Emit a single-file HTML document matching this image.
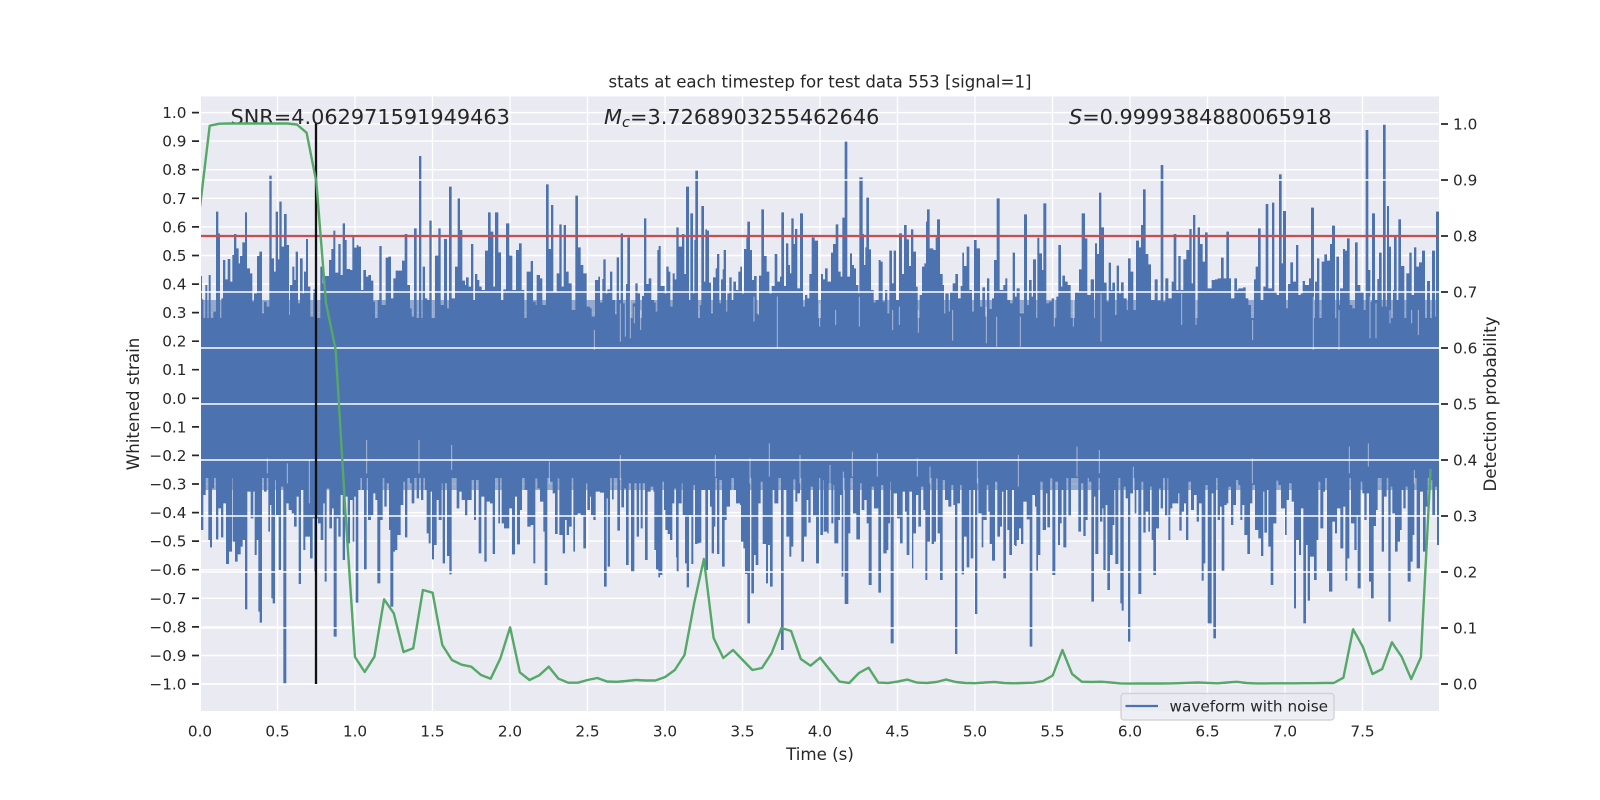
<!DOCTYPE html>
<html><head><meta charset="utf-8"><title>stats</title>
<style>html,body{margin:0;padding:0;background:#fff}svg{display:block}text{font-family:"DejaVu Sans","Liberation Sans",sans-serif;fill:#262626}</style></head>
<body>
<svg width="1600" height="800" viewBox="0 0 1600 800" xmlns="http://www.w3.org/2000/svg">
<defs><clipPath id="ax"><rect x="201" y="96.5" width="1238" height="614.5"/></clipPath></defs>
<rect x="201" y="96.5" width="1238" height="614.5" fill="#EAEAF2"/>
<path clip-path="url(#ax)" stroke="#fff" stroke-width="1.4" fill="none" d="M200 112.6H1440M200 141.1H1440M200 169.7H1440M200 198.3H1440M200 226.9H1440M200 255.5H1440M200 284.1H1440M200 312.6H1440M200 341.2H1440M200 369.7H1440M200 398.3H1440M200 426.9H1440M200 455.4H1440M200 484H1440M200 512.6H1440M200 541.1H1440M200 569.7H1440M200 598.3H1440M200 626.9H1440M200 655.5H1440M200 684H1440M277.5 96V712M355 96V712M432.5 96V712M510 96V712M587.5 96V712M665 96V712M742.5 96V712M820 96V712M897.5 96V712M975 96V712M1052.5 96V712M1130 96V712M1207.5 96V712M1285 96V712M1362.5 96V712"/>
<g clip-path="url(#ax)" fill="#4C72B0">
<rect x="200" y="340" width="1240" height="105"/>
<path transform="translate(190,90) scale(.33333)" d="M33 760V558H36V628H40V685H46V585H52V750H56V555H62V690H70V665H78V365H85V430H90V685H94V625H99V510H106V568H113V507H121V575H127V495H132V432H139V475H146V520H150V498H157V457H165V367H171V535H180V550H187V635H192V610H201V498H208V485H216V670H222V635H230V650H238V257H245V505H252V545H257V365H264V508H268V335H275V470H282V372H290V465H297V675H300V585H307V530H313V570H317V485H324V640H330V505H338V610H342V545H348V447H354V590H361V680H370V598H380V750H391V530H398V580H405V558H417V510H424V477H430V422H436V548H445V462H452V555H458V400H465V450H470V537H480V540H487V440H493V473H500V465H505V470H513V600H520V540H528V560H535V555H543V572H550V635H555V710H563V630H568V468H575V645H580V645H587V503H595V500H603V625H610V565H617V542H636V512H644V432H652V585H660V655H665V680H672V415H680V725H687V198H694V750H698V530H705V625H712V630H718V392H725V695H735V497H745V415H752V645H762V447H771V655H777V290H785V625H795V530H803V325H810V420H817V572H825V585H828V562H836V590H843V462H850V630H855V552H862V570H868V590H875V600H885V482H894V367H902V425H910V590H915V367H925V487H933V630H940V598H948V400H958V497H967V600H978V480H987V460H995V600H1003V690H1010V545H1022V513H1029V635H1037V645H1040V555H1050V565H1057V645H1068V283H1076V477H1083V345H1090V605H1100V550H1108V403H1115V590H1121V405H1128V545H1136V580H1145V660H1156V317H1164V472H1172V525H1180V550H1190V650H1200V760Z"/>
<path transform="translate(590,130) scale(.33333)" d="M0 660V535H5V560H15V450H25V440H30V518H37V447H40V388H47V490H52V478H60V425H67V510H75V553H80V382H87V510H92V310H99V520H108V462H112V322H120V625H128V520H136V460H143V490H150V600H156V498H162V265H169V462H176V445H184V510H192V518H197V545H202V360H206V348H212V468H224V490H229V410H236V425H241V530H248V430H254V448H259V292H266V350H270V350H276V312H283V432H288V170H297V510H301V250H309V490H313V330H316V122H324V565H330V525H334V228H342V455H346V298H351V302H357V458H363V550H369V442H377V415H381V372H388V520H393V448H398V418H401V360H408V545H412V490H418V442H425V510H430V455H438V480H445V425H451V410H456V490H462V357H469V322H472V275H480V360H486V450H492V438H500V550H507V437H514V238H522V378H530V425H538V490H545V468H554V372H562V455H570V440H574V247H582V468H588V340H595V405H600V430H604V265H611V342H615V297H622V475H630V250H639V530H645V495H652V505H658V432H665V322H674V332H684V580H693V432H699V448H705V415H713V455H723V368H729V342H737V283H745V425H752V440H757V263H764V35H772V440H780V370H786V405H792V415H798V465H805V490H808V142H818V312H822V405H826V352H829V203H837V358H843V480H851V518H857V510H866V390H872V395H878V515H885V480H892V550H898V362H906V460H911V362H918V510H927V310H936V432H942V285H950V328H957V408H963V298H970V365H978V470H983V570H989V495H996V410H1003V400H1008V275H1011V238H1019V355H1030V360H1037V322H1041V268H1050V432H1058V465H1062V550H1066V490H1076V545H1080V485H1088V460H1096V432H1104V505H1112V468H1117V368H1122V408H1130V350H1138V480H1146V545H1152V330H1160V355H1170V530H1177V472H1185V560H1191V445H1198V537H1206V505H1212V390H1220V205H1229V480H1240V465H1246V445H1252V510H1260V520H1268V368H1275V660Z"/>
<path transform="translate(1015,110) scale(.33333)" d="M0 720V560H5V535H14V610H27V313H36V585H42V510H50V560H54V448H63V635H67V383H73V430H81V480H85V280H94V580H102V575H110V565H118V650H124V560H130V405H138V530H142V497H150V515H158V525H167V650H175V640H180V545H192V478H200V310H210V385H217V555H227V508H237V635H240V400H246V432H252V248H259V352H267V518H275V575H281V458H288V540H292V518H300V615H305V467H312V550H318V517H326V565H335V600H339V445H347V485H355V600H363V392H372V412H378V345H384V238H392V432H400V463H408V570H419V508H428V572H437V165H445V575H451V505H460V565H470V515H476V372H484V540H490V438H497V540H505V448H514V420H523V357H530V520H534V315H541V640H548V352H555V402H563V455H570V367H578V535H590V510H600V508H608V505H618V443H626V505H634V365H642V505H648V565H658V505H666V540H670V535H684V532H692V565H700V585H708V630H714V690H717V508H722V470H729V355H737V570H745V530H752V282H760V535H771V278H778V545H785V555H792V193H800V460H804V303H813V595H819V522H826V457H834V515H843V405H850V555H857V550H863V513H870V525H882V505H888V293H897V655H900V515H906V445H913V670H920V455H928V433H936V452H945V402H951V347H960V640H964V440H972V585H975V535H984V417H990V422H996V385H1004V585H1012V595H1020V397H1028V525H1036V545H1046V600H1052V60H1060V480H1066V575H1071V310H1080V570H1087V507H1092V428H1100V590H1104V40H1112V590H1116V288H1122V410H1128V640H1134V540H1137V380H1145V570H1150V328H1158V468H1168V640H1174V490H1183V428H1190V555H1197V412H1204V470H1212V457H1221V422H1230V630H1236V513H1245V630H1251V422H1260V620H1263V305H1275V720Z"/>
<path transform="translate(190,440) scale(.33333)" d="M33 -10V270H40V165H47V70H55V300H60V322H66V145H72V100H78V298H85V205H93V292H100V190H108V372H117V335H126V75H128V305H135V365H143V343H152V320H158V300H165V508H172V155H182V235H190V155H194V345H200V300H205V515H209V548H216V110H222V155H230V95H235V275H240V195H244V475H248V490H255V120H258V225H266V390H273V140H280V732H289V190H296V210H305V220H312V260H320V170H326V432H333V150H340V330H346V290H354V290H360V355H368V235H373V395H378V235H384V250H392V300H400V190H404V425H410V145H418V265H426V205H431V590H440V235H445V290H452V165H458V360H465V170H473V310H480V180H488V305H493V170H497V488H505V150H511V108H516V150H522V388H530V0H534V240H543V225H550V160H556V180H562V430H571V240H578V35H583V200H590V130H597V270H601V500H610V335H615V330H622V285H632V195H640V125H645V292H652V110H660V130H665V190H673V100H680V175H687V0H693V180H700V90H705V150H710V280H716V310H722V155H726V358H732V315H740V180H746V240H755V130H758V370H765V130H771V348H778V403H785V15H790V100H800V205H808V155H815V180H825V230H832V180H845V120H852V240H858V120H866V340H874V170H883V365H890V185H900V190H908V342H915V70H925V250H930V85H935V250H942V265H950V265H958V205H966V343H975V170H981V313H990V210H996V90H1004V150H1012V260H1022V255H1030V370H1036V115H1042V145H1050V185H1060V275H1064V435H1072V65H1080V125H1088V160H1095V282H1103V115H1108V285H1118V340H1125V240H1130V285H1137V260H1145V80H1150V335H1155V225H1163V220H1172V225H1180V325H1188V130H1192V210H1200V-10Z"/>
<path transform="translate(590,440) scale(.33333)" d="M0 -10V170H3V225H10V240H17V155H30V158H42V440H50V175H53V380H60V95H66V178H71V110H82V272H90V45H94V202H102V145H108V375H116V130H123V398H133V130H140V290H147V130H152V265H158V130H165V360H173V155H182V140H190V155H193V330H198V388H205V412H210V405H217V125H222V210H226V270H233V282H240V300H247V190H253V145H258V352H260V398H266V190H275V130H278V225H285V370H290V442H297V225H304V372H310V135H315V312H322V310H328V308H334V150H346V390H354V150H360V200H365V340H372V260H376V100H381V342H388V120H396V380H404V240H410V200H420V150H424V105H432V150H438V190H450V195H453V305H460V325H465V402H472V550H480V55H484V460H492V345H497V375H505V190H512V125H518V312H528V430H534V315H540V440H548V150H553V190H565V105H573V630H581V150H589V290H598V350H604V320H610V118H616V185H622V160H630V45H634V365H642V290H650V180H655V248H662V140H669V230H678V370H687V60H691V285H699V120H701V275H712V280H716V130H724V250H730V135H733V310H745V240H750V165H755V410H760V95H764V492H775V280H781V80H789V220H799V298H810V130H815V210H823V180H830V250H836V435H845V140H852V205H865V458H873V135H880V340H890V330H895V250H900V125H902V610H911V160H921V235H930V310H938V155H945V215H950V345H958V155H966V385H970V280H978V165H985V260H993V140H1000V210H1006V420H1012V305H1020V80H1025V312H1032V305H1038V115H1043V280H1050V420H1058V120H1065V180H1075V200H1084V135H1090V195H1095V642H1102V190H1110V135H1115V403H1122V290H1130V382H1138V150H1142V355H1150V150H1155V522H1162V60H1165V220H1175V322H1180V240H1190V135H1195V215H1199V312H1206V362H1215V125H1222V290H1230V260H1236V155H1240V415H1248V150H1252V270H1258V345H1266V150H1272V315H1275V-10Z"/>
<path transform="translate(1015,440) scale(.33333)" d="M0 -10V318H5V300H12V265H18V312H25V185H35V238H44V620H52V165H60V200H64V392H69V345H76V125H83V270H93V160H97V262H105V115H112V405H121V125H129V315H135V250H140V150H145V322H154V90H160V230H168V70H175V95H185V20H190V275H198V130H205V288H212V240H218V105H222V125H229V485H237V170H241V342H250V80H255V245H262V205H265V390H272V195H277V450H285V345H293V255H298V150H301V372H310V105H316V490H320V512H326V140H332V175H339V605H346V160H354V80H359V220H364V150H370V462H379V125H385V278H392V215H400V275H405V140H410V300H415V405H423V265H432V145H437V205H444V105H450V230H457V110H460V300H466V205H472V190H480V190H490V160H493V272H500V215H507V190H513V300H520V125H528V210H537V165H545V245H552V190H560V422H566V370H571V135H578V550H590V160H595V595H603V85H608V240H615V200H620V392H628V195H635V190H640V140H648V255H655V195H663V120H670V135H676V240H682V195H688V285H697V342H705V190H712V135H720V270H730V295H738V348H745V155H748V278H756V150H760V320H767V435H775V250H784V122H790V135H798V205H810V285H815V180H822V130H830V185H837V505H843V300H852V345H858V205H865V550H873V315H878V482H885V350H897V420H905V300H910V125H916V265H925V155H930V110H936V393H942V455H952V245H960V280H966V205H976V325H985V200H991V422H997V355H1003V45H1008V250H1018V330H1025V225H1028V445H1037V125H1042V160H1048V240H1055V160H1062V425H1068V475H1076V258H1083V210H1088V70H1100V335H1107V170H1115V95H1120V545H1127V140H1132V220H1140V335H1148V305H1155V270H1160V150H1165V205H1172V140H1178V425H1187V365H1193V285H1198V90H1205V385H1215V155H1224V335H1232V200H1238V105H1245V120H1252V225H1260V140H1266V315H1275V-10Z"/>
<rect x="200" y="318" width="1240" height="24"/>
<rect x="200" y="300" width="1240" height="18" fill-opacity=".55"/>
<rect x="200" y="444" width="1240" height="34"/>
<rect x="200" y="478" width="1240" height="12" fill-opacity=".55"/>
<g fill="none" stroke="#EAEAF2" stroke-opacity=".6" stroke-width="3">
<path transform="translate(190,90)" stroke-width="1" d="M0 0"/>
<path transform="translate(590,130) scale(.33333)" d="M13 600V660M91 520V635M106 520V620M121 500V625M133 530V580M152 540V600M562 500V655M505 490V555M492 500V575M689 520V590M908 540V600M1088 540V632M1189 530V640M1220 560V650M985 540V608M928 530V585M808 500V590M737 540V585"/>
<path transform="translate(1015,110) scale(.33333)" d="M258 550V695M895 560V720M972 600V720M1083 580V685M1065 560V685M1125 600V640M118 560V650M16 620V710M713 630V690M543 570V645M500 550V645M1210 600V675M1190 600V640M175 560V650"/>
<path transform="translate(590,440) scale(.33333)" d="M91 45V120M480 55V130M538 10V110M630 45V130M787 35V110M862 40V110M1162 60V130M1020 80V130M720 75V130M760 95V150M376 45V110M982 55V110"/>
<path transform="translate(1015,440) scale(.33333)" d="M186 20V110M253 30V100M712 55V130M1003 20V100M1060 10V80M355 80V150M10 45V140M1198 90V130"/>
<path transform="translate(190,440) scale(.33333)" d="M687 0V100M785 15V90M530 0V100M232 55V100M292 70V130M358 60V190M1078 65V130"/>
</g>
</g>
<path clip-path="url(#ax)" stroke="#fff" stroke-width="1.4" fill="none" d="M200 684H1440M200 628H1440M200 572H1440M200 516H1440M200 460H1440M200 404H1440M200 348H1440M200 292H1440M200 236H1440M200 180H1440M200 124H1440"/>
<path d="M201 236H1439" stroke="#C44E52" stroke-width="2.3" fill="none"/>
<path d="M316 123.5V684" stroke="#111" stroke-width="2.3" fill="none"/>
<text x="230.5" y="124" font-size="20.83">SNR=4.062971591949463</text>
<text x="604" y="124" font-size="20.83"><tspan font-style="italic">M</tspan><tspan font-style="italic" font-size="14.6" dy="3.2">c</tspan><tspan dy="-3.2">=3.7268903255462646</tspan></text>
<text x="1069" y="124" font-size="20.83"><tspan font-style="italic">S</tspan>=0.9999384880065918</text>
<polyline clip-path="url(#ax)" fill="none" stroke="#55A868" stroke-width="2.4" stroke-linejoin="round" points="200,207 209.7,125.7 219.4,123.7 229.1,123.5 238.8,123.5 248.5,123.5 258.1,123.5 267.8,123.5 277.5,123.5 287.2,123.5 296.9,124.5 306.6,132.7 316.3,181.7 326,303 335.7,350 345.4,512 355,657 364.7,672 374.4,656.7 384.1,599.3 393.8,613.3 403.5,652 413.2,648.3 422.9,590 432.6,592.7 442.3,645 451.9,660 461.6,664.7 471.3,666.7 481,675 490.7,678.7 500.4,658.3 510.1,627.3 519.8,672.3 529.5,680 539.2,675.3 548.8,666.7 558.5,678.7 568.2,682.7 577.9,682.7 587.6,680 597.3,678 607,681.5 616.7,681.8 626.4,681 636,680 645.7,680.5 655.4,680.5 665.1,677 674.8,670 684.5,655 694.2,603 703.9,559 713.6,638 723.3,658 733,650 742.7,660 752.4,670 762,668 771.7,653 781.4,628 791.1,631 800.8,659 810.5,665.7 820.2,657.7 829.9,670 839.5,681.6 849.2,683 858.9,673 868.6,667.7 878.3,682.6 888,683 897.7,681.6 907.4,679.6 917.1,682.6 926.8,683 936.4,682 946.1,679.6 955.8,682 965.5,683 975.2,683.2 984.9,682.5 994.6,682 1004.3,683 1014,683.3 1023.7,683 1033.3,682.7 1043,681 1052.7,675.5 1062.4,650 1072.1,674 1081.8,681.7 1091.5,682 1101.2,681.7 1110.9,682.5 1120.6,683.4 1130.3,683.6 1140,683.5 1149.6,683.5 1159.3,683.5 1169,683.4 1178.7,683.2 1188.4,682.8 1198.1,682.5 1207.8,682.9 1217.5,683.3 1227.2,682.5 1236.8,681.8 1246.5,683 1256.2,683.4 1265.9,683.4 1275.6,683.3 1285.3,683.3 1295,683.3 1304.7,683.2 1314.4,683.2 1324,683 1333.7,683 1343.4,677.7 1353.1,629.3 1362.8,646.7 1372.5,674 1382.2,669 1391.9,642.3 1401.6,656.7 1411.2,679 1420.9,657.3 1430.6,469"/>
<path stroke="#262626" stroke-width="1.7" fill="none" d="M192 112.6H199M192 141.1H199M192 169.7H199M192 198.3H199M192 226.9H199M192 255.5H199M192 284.1H199M192 312.6H199M192 341.2H199M192 369.7H199M192 398.3H199M192 426.9H199M192 455.4H199M192 484H199M192 512.6H199M192 541.1H199M192 569.7H199M192 598.3H199M192 626.9H199M192 655.5H199M192 684H199M1441 684H1448M1441 628H1448M1441 572H1448M1441 516H1448M1441 460H1448M1441 404H1448M1441 348H1448M1441 292H1448M1441 236H1448M1441 180H1448M1441 124H1448"/>
<g font-size="15.28" text-anchor="end">
<text x="186.5" y="118.1">1.0</text><text x="186.5" y="146.6">0.9</text><text x="186.5" y="175.2">0.8</text><text x="186.5" y="203.8">0.7</text><text x="186.5" y="232.4">0.6</text><text x="186.5" y="261">0.5</text><text x="186.5" y="289.6">0.4</text><text x="186.5" y="318.1">0.3</text><text x="186.5" y="346.7">0.2</text><text x="186.5" y="375.2">0.1</text><text x="186.5" y="403.8">0.0</text><text x="186.5" y="432.4">−0.1</text><text x="186.5" y="460.9">−0.2</text><text x="186.5" y="489.5">−0.3</text><text x="186.5" y="518.1">−0.4</text><text x="186.5" y="546.6">−0.5</text><text x="186.5" y="575.2">−0.6</text><text x="186.5" y="603.8">−0.7</text><text x="186.5" y="632.4">−0.8</text><text x="186.5" y="661">−0.9</text><text x="186.5" y="689.5">−1.0</text>
</g>
<g font-size="15.28">
<text x="1453" y="689.5">0.0</text><text x="1453" y="633.5">0.1</text><text x="1453" y="577.5">0.2</text><text x="1453" y="521.5">0.3</text><text x="1453" y="465.5">0.4</text><text x="1453" y="409.5">0.5</text><text x="1453" y="353.5">0.6</text><text x="1453" y="297.5">0.7</text><text x="1453" y="241.5">0.8</text><text x="1453" y="185.5">0.9</text><text x="1453" y="129.5">1.0</text>
</g>
<g font-size="15.28" text-anchor="middle">
<text x="200" y="736.7">0.0</text><text x="277.5" y="736.7">0.5</text><text x="355" y="736.7">1.0</text><text x="432.5" y="736.7">1.5</text><text x="510" y="736.7">2.0</text><text x="587.5" y="736.7">2.5</text><text x="665" y="736.7">3.0</text><text x="742.5" y="736.7">3.5</text><text x="820" y="736.7">4.0</text><text x="897.5" y="736.7">4.5</text><text x="975" y="736.7">5.0</text><text x="1052.5" y="736.7">5.5</text><text x="1130" y="736.7">6.0</text><text x="1207.5" y="736.7">6.5</text><text x="1285" y="736.7">7.0</text><text x="1362.5" y="736.7">7.5</text>
</g>
<text x="820" y="87.7" font-size="16.6" text-anchor="middle">stats at each timestep for test data 553 [signal=1]</text>
<text x="820" y="760" font-size="16.67" text-anchor="middle">Time (s)</text>
<text transform="translate(139,404) rotate(-90)" font-size="16.67" text-anchor="middle">Whitened strain</text>
<text transform="translate(1496,404) rotate(-90)" font-size="16.67" text-anchor="middle">Detection probability</text>
<rect x="1121" y="693.5" width="213" height="26.5" rx="3" fill="#EAEAF2" fill-opacity=".8" stroke="#ccc" stroke-opacity=".8" stroke-width="1.4"/>
<path d="M1125.5 706H1158" stroke="#4C72B0" stroke-width="2.3" fill="none"/>
<text x="1169.5" y="711.5" font-size="15.28">waveform with noise</text>
</svg>
</body></html>
